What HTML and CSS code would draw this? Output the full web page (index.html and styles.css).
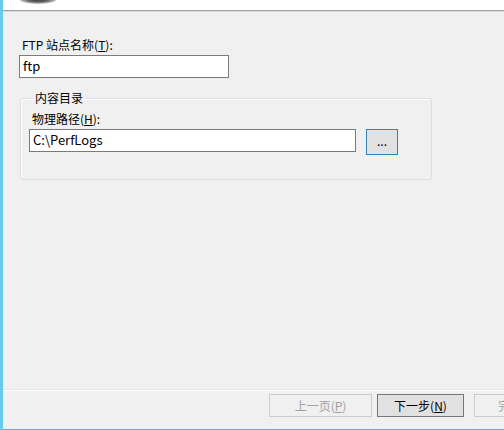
FILE: index.html
```html
<!DOCTYPE html>
<html lang="zh-CN">
<head>
<meta charset="utf-8">
<title>FTP 站点</title>
<link rel="stylesheet" href="styles.css">
</head>
<body>
<div class="page">
  <div class="strip"></div>
  <div class="main">
    <div class="header"></div>
    <div class="content">
      <div class="label">FTP 站点名称(<u>T</u>):</div>
      <div class="input site">ftp</div>
      <fieldset class="group">
        <legend class="legend">内容目录</legend>
        <div class="label">物理路径(<u>H</u>):</div>
        <div class="row">
          <div class="input path">C:\PerfLogs</div>
          <div class="browse">...</div>
        </div>
      </fieldset>
    </div>
    <div class="footer">
      <div class="btn prev">上一页(<u>P</u>)</div>
      <div class="btn next">下一步(<u>N</u>)</div>
      <div class="btn finish">完成(<u>F</u>)</div>
    </div>
    <div class="bottomline"></div>
  </div>
</div>
</body>
</html>
```
FILE: styles.css
```css
html, body {
  margin: 0;
  padding: 0;
  width: 504px;
  height: 430px;
  overflow: hidden;
  background: #f0f0f0;
}
.page {
  display: flex;
  width: 504px;
  height: 430px;
  font-family: "Noto Sans CJK SC", "Noto Sans", sans-serif;
  font-size: 12px;
  color: #000;
}
.strip {
  width: 3px;
  flex-shrink: 0;
  background: #64cbee;
}
.main {
  flex: 1;
  display: flex;
  flex-direction: column;
  overflow: hidden;
  min-width: 0;
}
.header {
  position: relative;
  height: 10px;
  background: #ffffff;
  border-bottom: 1px solid #a0a0a0;
  box-shadow: 0 1px 0 #d9d9d9;
}
.header::before {
  content: "";
  position: absolute;
  left: 16px;
  top: -6px;
  width: 38px;
  height: 10px;
  border-radius: 50%;
  background: radial-gradient(ellipse at center, #303030 0%, #606060 40%, rgba(120,120,120,0.4) 70%, rgba(255,255,255,0) 100%);
}
.content {
  padding: 25px 0 0 16px;
}
.label {
  line-height: 17px;
  padding-left: 3px;
  margin-bottom: 2px;
  white-space: nowrap;
}
.label u, .btn u {
  text-decoration: underline;
  text-underline-offset: 1px;
}
.input {
  box-sizing: border-box;
  height: 23px;
  border: 1px solid #7a7a7a;
  background: #ffffff;
  line-height: 20px;
  padding-left: 3px;
  white-space: nowrap;
}
.site {
  width: 210px;
  font-size: 13px;
}
.group {
  margin: 12px 0 0 1px;
  width: 412px;
  box-sizing: border-box;
  border: 1px solid #d7dee5;
  border-radius: 3px;
  box-shadow: inset 1px 1px 0 #ffffff;
  padding: 4px 0 24px 8px;
  min-width: 0;
}
.legend {
  line-height: 16px;
  padding: 0 2px;
  margin-left: 4px;
}
.group .label {
  margin-bottom: 2px;
}
.row {
  display: flex;
  align-items: flex-start;
  gap: 10px;
}
.path {
  width: 327px;
  font-size: 13px;
}
.browse {
  box-sizing: border-box;
  width: 32px;
  height: 26px;
  border: 1px solid #3c7fb1;
  background: #e1e1e1;
  text-align: center;
  line-height: 22px;
  font-size: 12px;
}
.footer {
  margin-top: auto;
  border-top: 1px solid #ffffff;
  box-shadow: 0 -1px 0 #e3e3e3;
  height: 39px;
  box-sizing: border-box;
  padding: 3px 0 0 266px;
  display: flex;
  align-items: flex-start;
  gap: 0;
}
.btn {
  box-sizing: border-box;
  flex-shrink: 0;
  height: 23px;
  text-align: center;
  line-height: 21px;
  white-space: nowrap;
}
.prev {
  width: 103px;
  border: 1px solid #cccccc;
  color: #a0a0a0;
  background: #f0f0f0;
}
.next {
  width: 87px;
  margin-left: 5px;
  border: 1px solid #767676;
  background: #e1e1e1;
}
.finish {
  width: 87px;
  margin-left: 10px;
  border: 1px solid #cccccc;
  color: #a0a0a0;
  background: #f0f0f0;
}
.bottomline {
  height: 1px;
  background: #6aaed6;
  flex-shrink: 0;
}
```
